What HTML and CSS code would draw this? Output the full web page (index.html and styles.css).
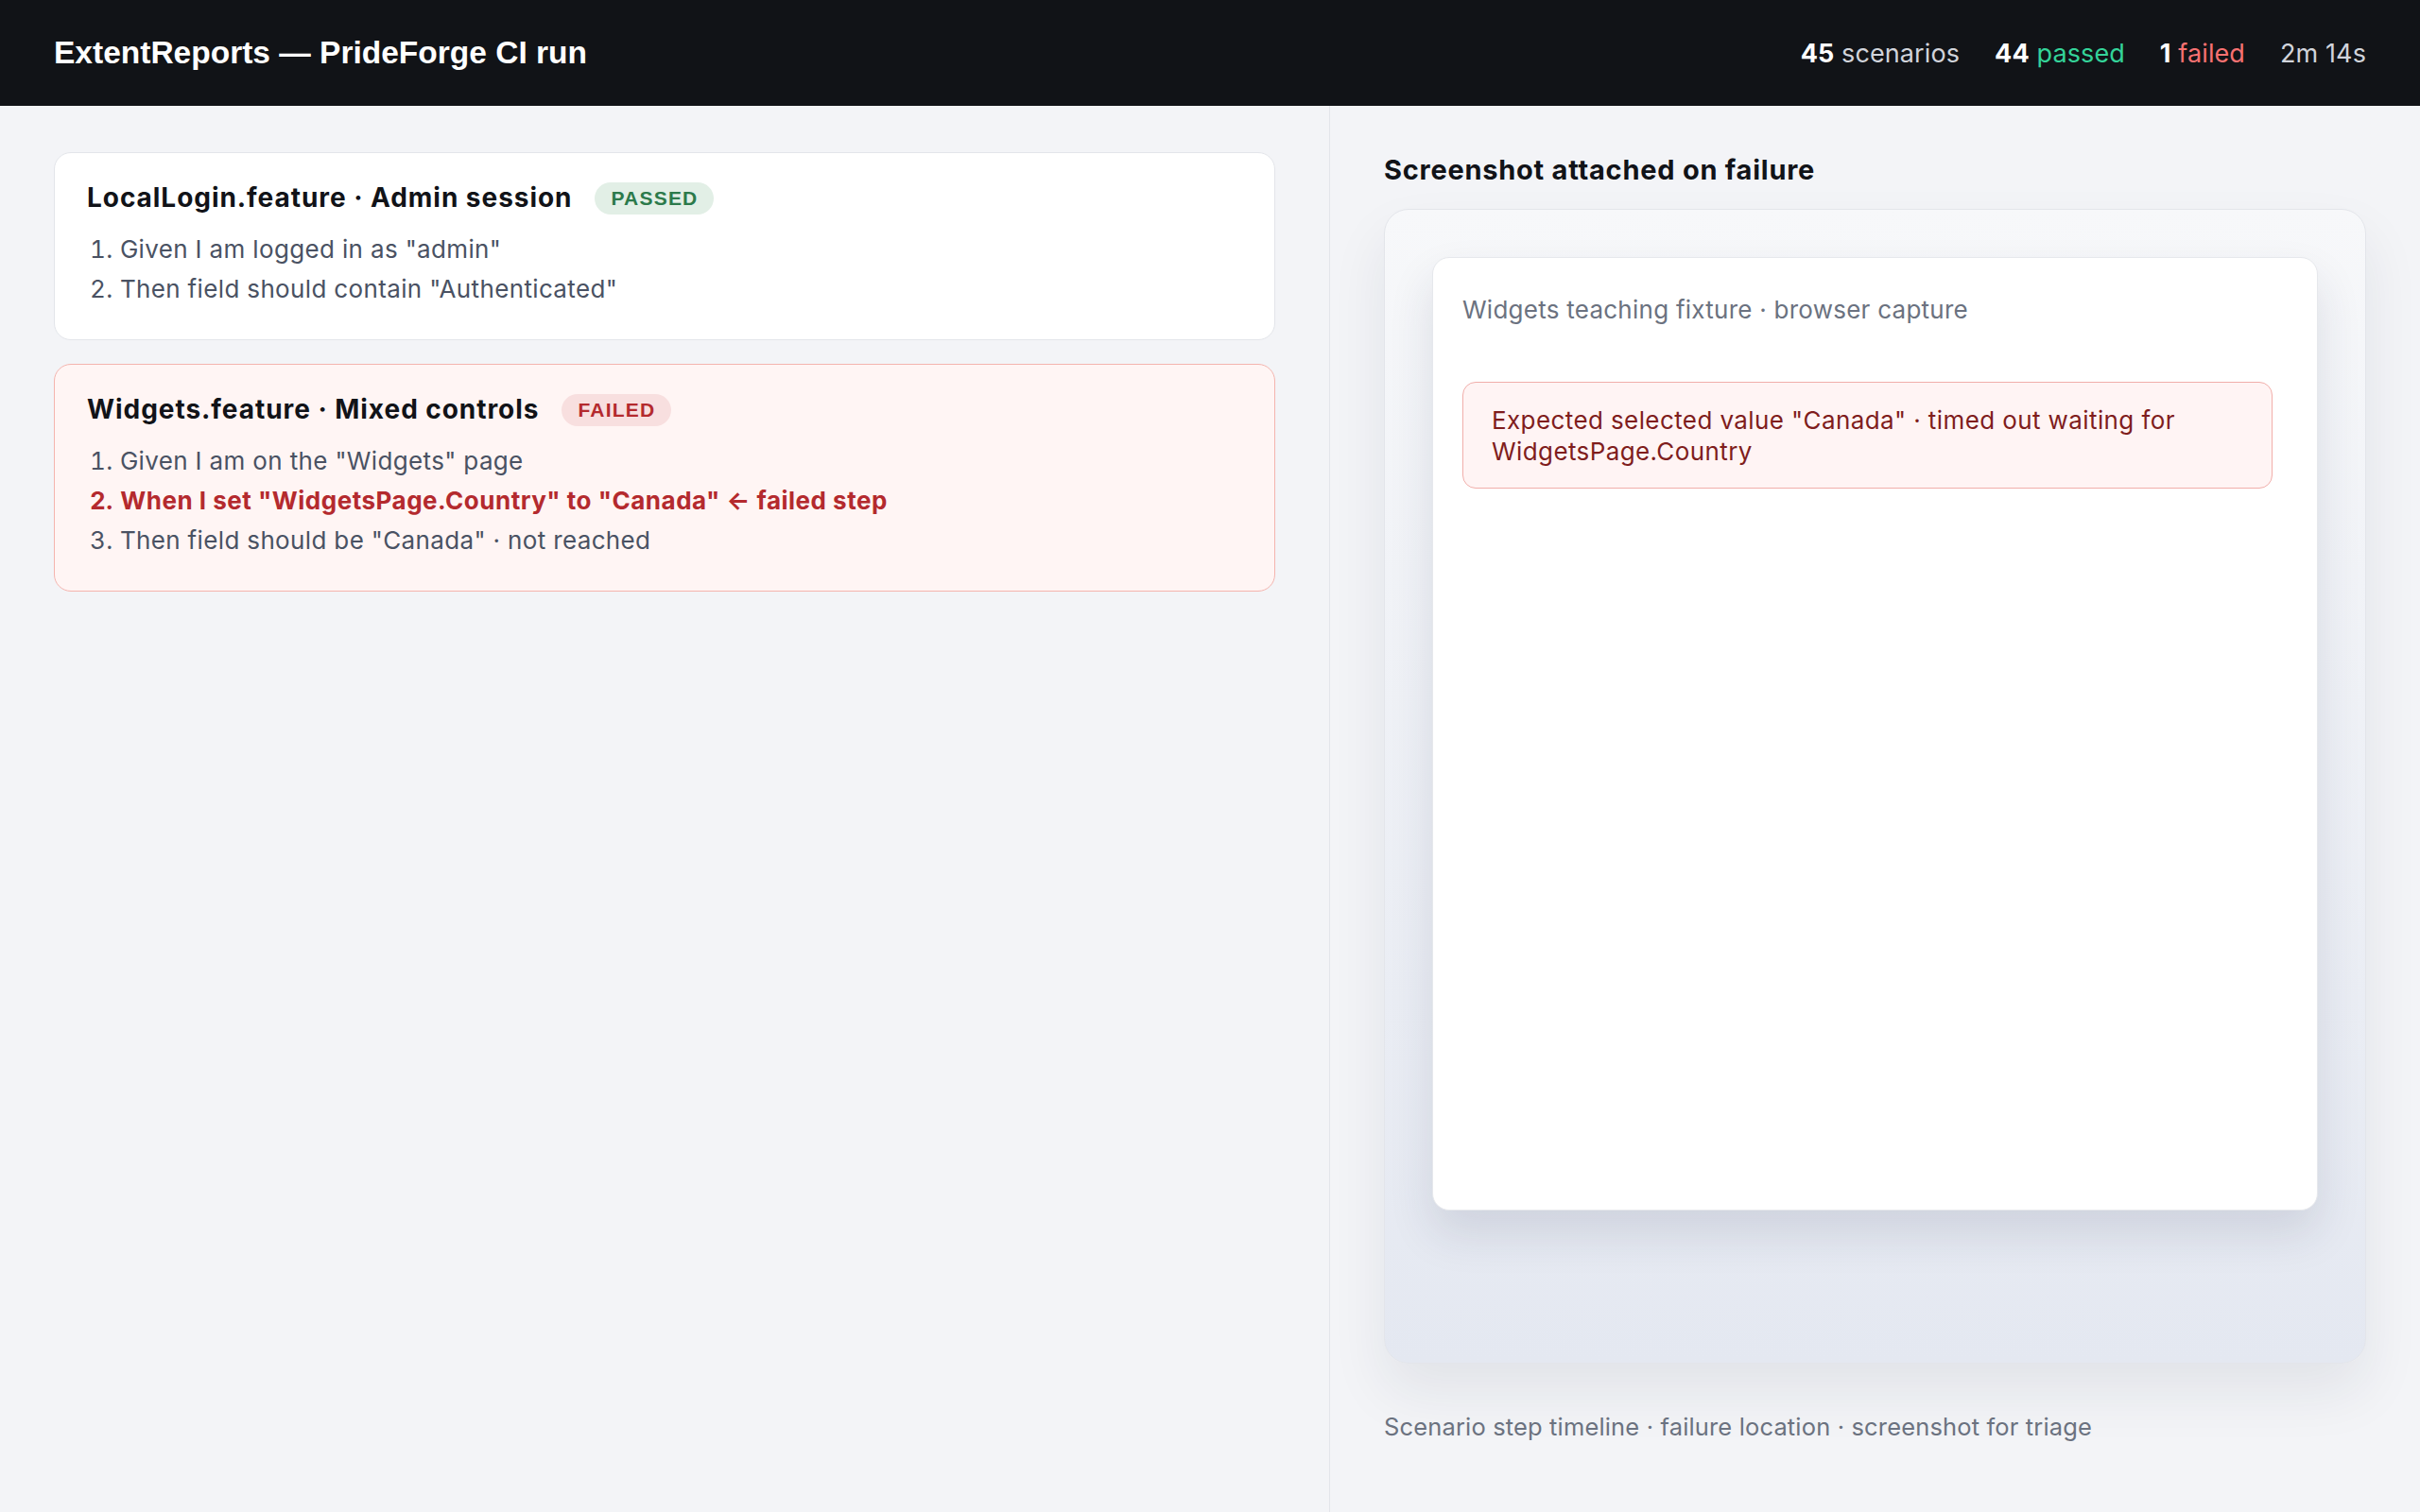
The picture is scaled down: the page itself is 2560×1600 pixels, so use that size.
FILE: index.html
```html
<!DOCTYPE html>
<html lang="en">
<head>
    <meta charset="UTF-8">
    <meta name="viewport" content="width=device-width, initial-scale=1.0">
    <title>ExtentReports - PrideForge CI run</title>
    <link rel="stylesheet" href="styles.css">
</head>
<body>
    <div class="topbar">
        <h1 class="run-title">ExtentReports — PrideForge CI run</h1>
        <div class="run-stats">
            <span><b>45</b> scenarios</span>
            <span><b>44</b> <em class="ok">passed</em></span>
            <span><b>1</b> <em class="bad">failed</em></span>
            <span>2m 14s</span>
        </div>
    </div>

    <div class="layout">
        <div class="scenarios">
            <div class="scenario">
                <div class="scenario-head">
                    <h2>LocalLogin.feature · Admin session</h2>
                    <span class="badge passed">PASSED</span>
                </div>
                <ol class="steps">
                    <li>Given I am logged in as "admin"</li>
                    <li>Then field should contain "Authenticated"</li>
                </ol>
            </div>

            <div class="scenario failed">
                <div class="scenario-head">
                    <h2>Widgets.feature · Mixed controls</h2>
                    <span class="badge failed">FAILED</span>
                </div>
                <ol class="steps">
                    <li>Given I am on the "Widgets" page</li>
                    <li class="step-failed">When I set "WidgetsPage.Country" to "Canada" ← failed step</li>
                    <li>Then field should be "Canada" · not reached</li>
                </ol>
            </div>
        </div>

        <div class="attachment">
            <h3>Screenshot attached on failure</h3>
            <div class="shot-frame">
                <div class="shot-page">
                    <p class="shot-label">Widgets teaching fixture · browser capture</p>
                    <div class="shot-error">Expected selected value "Canada" · timed out waiting for WidgetsPage.Country</div>
                </div>
            </div>
            <p class="caption">Scenario step timeline · failure location · screenshot for triage</p>
        </div>
    </div>
</body>
</html>
```

FILE: styles.css
```css
body{
    margin: 0;
    font-family: Inter, "Noto Sans", sans-serif;
    background-color: #f3f4f7;
    color: #111318;
}

.topbar {
    display: flex;
    align-items: center;
    justify-content: space-between;
    height: 112px;
    padding: 0 57px;
    background-color: #111317;
    box-sizing: border-box;
}

.run-title {
    margin: 0;
    font-family: "Liberation Sans", Arial, sans-serif;
    font-size: 33.5px;
    font-weight: bold;
    color: white;
}

.run-stats {
    display: flex;
    gap: 37px;
    font-size: 27px;
    letter-spacing: 0.1px;
    color: #d1d4db;
}

.run-stats b {
    color: white;
    font-weight: 700;
}

.run-stats em {
    font-style: normal;
}

.run-stats .ok {
    color: #34d399;
}

.run-stats .bad {
    color: #f87171;
}

.layout {
    display: flex;
    min-height: 1488px;
}

/* left column with the scenario cards */
.scenarios {
    width: 1406px;
    padding: 49px 57px;
    box-sizing: border-box;
    display: flex;
    flex-direction: column;
    gap: 25px;
}

.scenario {
    background: white;
    border: 1px solid #e3e5ea;
    border-radius: 18px;
    padding: 30px 34px 32px;
}

.scenario.failed {
    background: #fff5f4;
    border-color: #f4b4ae;
}

.scenario-head {
    display: flex;
    align-items: center;
    gap: 24px;
}

.scenario-head h2 {
    margin: 0;
    font-size: 28px;
    line-height: 35px;
    font-weight: 700;
    letter-spacing: 0.95px;
    color: #111318;
}

.badge {
    font-family: "Liberation Sans", Arial, sans-serif;
    font-size: 21px;
    font-weight: bold;
    letter-spacing: 1.2px;
    padding: 0 17px;
    line-height: 34px;
    border-radius: 20px;
}

.badge.passed {
    background: #e2efe6;
    color: #2c7a4b;
}

.badge.failed {
    background: #f8dfdf;
    color: #b42a2e;
}

.steps {
    margin: 16px 0 0;
    padding: 0 0 0 3px;
    list-style: decimal inside;
    font-size: 26px;
    line-height: 42px;
    letter-spacing: 0.35px;
    color: #4a5263;
}

.steps .step-failed {
    color: #b42a2e;
    font-weight: 700;
    letter-spacing: 0.5px;
}

/* right column, the attached screenshot */
.attachment {
    flex: 1;
    border-left: 1px solid #e3e5ea;
    padding: 50px 57px;
}

.attachment h3 {
    margin: 0 0 23px;
    font-size: 29px;
    line-height: 36px;
    font-weight: 700;
    letter-spacing: 0.75px;
}

.shot-frame {
    height: 1222px;
    box-sizing: border-box;
    padding: 50px 50px 0;
    border: 1px solid #e3e5ea;
    border-radius: 26px;
    background: linear-gradient(180deg, #f7f8fa 0%, #e4e8f1 100%);
    box-shadow: 0 30px 60px rgba(30, 40, 60, 0.08);
}

.shot-page {
    height: 1009px;
    box-sizing: border-box;
    background: white;
    border: 1px solid #e6e8ec;
    border-radius: 18px;
    padding: 35px 47px 0 31px;
    box-shadow: 0 24px 48px rgba(30, 40, 70, 0.12);
}

.shot-label {
    margin: 0 0 57px;
    font-size: 26px;
    line-height: 39px;
    letter-spacing: 0.25px;
    color: #6b7280;
}

.shot-error {
    background: #fff4f4;
    border: 1px solid #f1aeaa;
    border-radius: 14px;
    padding: 23px 30px 22px;
    font-size: 26px;
    line-height: 33px;
    letter-spacing: 0.4px;
    color: #7f1d1d;
}

.caption {
    margin: 48px 0 0;
    font-size: 25.5px;
    line-height: 38px;
    letter-spacing: 0.15px;
    color: #6b7280;
}
```
